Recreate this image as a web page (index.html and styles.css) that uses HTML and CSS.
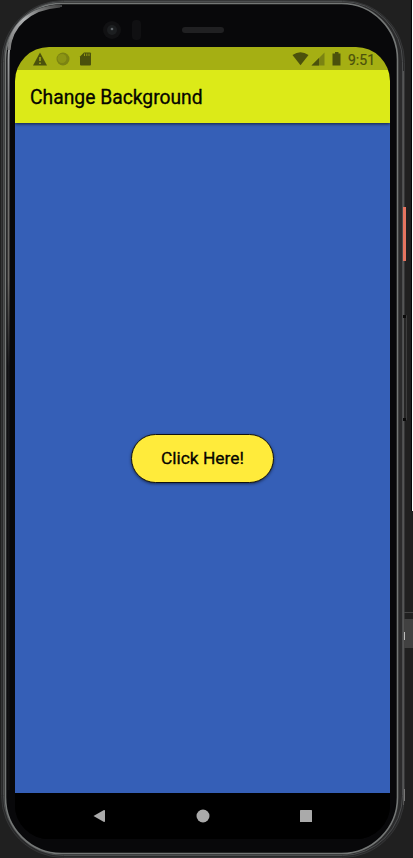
FILE: index.html
```html
<!DOCTYPE html>
<html lang="en">
<head>
<meta charset="utf-8">
<title>Change Background</title>
<link rel="stylesheet" href="styles.css">
</head>
<body>
<div class="device">
  <svg class="frame" width="413" height="858" viewBox="0 0 413 858" aria-hidden="true">
    <defs>
      <linearGradient id="rim" x1="0" y1="0" x2="0" y2="1">
        <stop offset="0" stop-color="#444647"/><stop offset=".06" stop-color="#a0a2a3"/><stop offset=".13" stop-color="#777"/><stop offset=".35" stop-color="#6b6966"/><stop offset=".46" stop-color="#18181b"/><stop offset="1" stop-color="#101012"/>
      </linearGradient>
      <linearGradient id="glint" x1="0" y1="1" x2="1" y2="0">
        <stop offset="0" stop-color="#777"/><stop offset=".5" stop-color="#b0b2b3"/><stop offset="1" stop-color="#444"/>
      </linearGradient>
    </defs>
    <rect width="413" height="858" fill="#202020"/>
    <path d="M411 0H412V511H411Z" fill="#080808"/>
    <path d="M412 0H413V511H412Z" fill="#fff"/>
    <rect x="1.5" y=".5" width="403" height="857" rx="62" fill="#29292a" stroke="#353637"/>
    <rect x="3.500" y="1.500" width="399" height="854" rx="60" fill="#2b2b2c" stroke="#4b4d4e"/>
    <rect x="5.500" y="3.500" width="392" height="850" rx="56" fill="#08080a" stroke="#747776" stroke-width="1.600"/>
    <path d="M8.500 790V60Q8.500 6 62 6" fill="none" stroke="url(#rim)" stroke-width="2"/>
    <path d="M9 50C10 27 29 8 60 6" fill="none" stroke="url(#glint)" stroke-width="3"/>
    <path d="M403.500 71V805" stroke="#555" fill="none"/>
    <rect x="403" y="207" width="3" height="54" fill="#e57460"/>
    <path d="M404 315.500H406.500V420H404" stroke="#3c3c3c" fill="#252525"/>
    <path d="M403 315H406V318H403ZM403 418H406V421H403Z" fill="#0b0b0b"/>
    <path d="M404 612.500H413" stroke="#444"/>
    <rect x="404" y="619" width="9" height="29" fill="#414141"/>
    <rect x="404" y="632" width="1" height="8" fill="#bbb"/>
    <path d="M404.500 789V801" stroke="#777"/>
    <circle cx="112" cy="30" r="9" fill="#111113"/>
    <circle cx="112" cy="30" r="5" fill="#1c1e20"/>
    <circle cx="112" cy="29" r="1.300" fill="#62676b"/>
    <rect x="132" y="20" width="9" height="20" rx="4" fill="#101012"/>
    <rect x="182" y="27" width="42" height="6" rx="3" fill="#202022"/>
  </svg>
  <main class="screen">
    <div class="status">
      <svg class="status-left" width="62" height="16" viewBox="0 0 62 16">
        <path d="M8 1.500L15 14.500H1Z" fill="#4b510c"/>
        <path d="M8 6V10M8 11.500V13" stroke="#a5af13" stroke-width="1.500"/>
        <circle cx="31" cy="8" r="6.500" fill="#7b8312"/>
        <circle cx="30" cy="7.500" r="4.500" fill="#8c9514"/>
        <path d="M52 1.500H58Q59 1.500 59 2.500V13.500Q59 14.500 58 14.500H49Q48 14.500 48 13.500V5.500Z" fill="#4b510c"/>
        <path d="M52.500 2.500V5M54.800 2.500V5M57 2.500V5" stroke="#a5af13" stroke-width=".8"/>
      </svg>
      <svg class="status-right" width="50" height="16" viewBox="0 0 50 16">
        <path d="M.5 4Q8.500 -1.500 16.500 4L8.500 14.200Z" fill="#4b510c"/>
        <path d="M19.500 14.500L32.500 1.500V14.500Z" fill="#7b8312"/>
        <path d="M19.500 14.500L27 7V14.500Z" fill="#4b510c"/>
        <path d="M43 1H46.500V2.500H48.500V14.500H40.500V2.500H43Z" fill="#4b510c"/>
      </svg>
      <span class="time">9:51</span>
    </div>
    <header class="appbar"><h1>Change Background</h1></header>
    <section class="content"><button class="action">Click Here!</button></section>
    <nav class="nav">
      <svg width="12" height="14" viewBox="0 0 12 14"><path d="M.5 7L11 1Q12 .7 12 2V12Q12 13.300 11 13Z" fill="#aaa"/></svg>
      <svg width="14" height="14" viewBox="0 0 14 14"><circle cx="7" cy="7" r="6.500" fill="#aaa"/></svg>
      <svg width="12" height="12" viewBox="0 0 12 12"><rect width="12" height="12" rx=".5" fill="#aaa"/></svg>
    </nav>
  </main>
</div>
</body>
</html>
```
FILE: styles.css
```css
* { box-sizing: border-box; }
body { margin: 0; background: #202020; font-family: Roboto, sans-serif; overflow: hidden; }
.device { position: relative; width: 413px; height: 858px; padding: 47px 23px 19px 15px; }
.frame { position: absolute; inset: 0; }
.screen { position: relative; display: flex; flex-direction: column; width: 375px; height: 792px; border-radius: 34px; overflow: hidden; background: #000; }
.status { position: relative; z-index: 2; display: flex; align-items: center; height: 23px; padding: 0 15px 0 17px; background: #a5af13; }
.status-right { margin-left: auto; }
.time { margin-left: 6px; width: 27px; padding-top: 2px; font-size: 14px; line-height: 22px; color: #4b510c; -webkit-text-stroke: .2px #4b510c; white-space: nowrap; }
.appbar { position: relative; z-index: 1; display: flex; align-items: center; height: 53px; padding: 2px 15px 0; background: #dcea18; box-shadow: 0 1px 3px rgba(0, 0, 0, .65); }
.appbar h1 { margin: 0; font-size: 19.3px; font-weight: 400; line-height: 24px; color: #050500; -webkit-text-stroke: .3px #050500; }
.content { display: flex; flex: 1; align-items: center; justify-content: center; background: #355fb7; }
.action { width: 143px; height: 49px; padding: 0; border: 1px solid #111; border-radius: 25px; background: #ffeb3b; box-shadow: 0 1px 3px rgba(0, 0, 0, .5); font: 400 17.4px/24px Roboto, sans-serif; color: #050400; -webkit-text-stroke: .3px #050400; }
.nav { display: flex; align-items: center; justify-content: space-between; height: 46px; padding: 0 78px 0 78px; background: #000; }
```
